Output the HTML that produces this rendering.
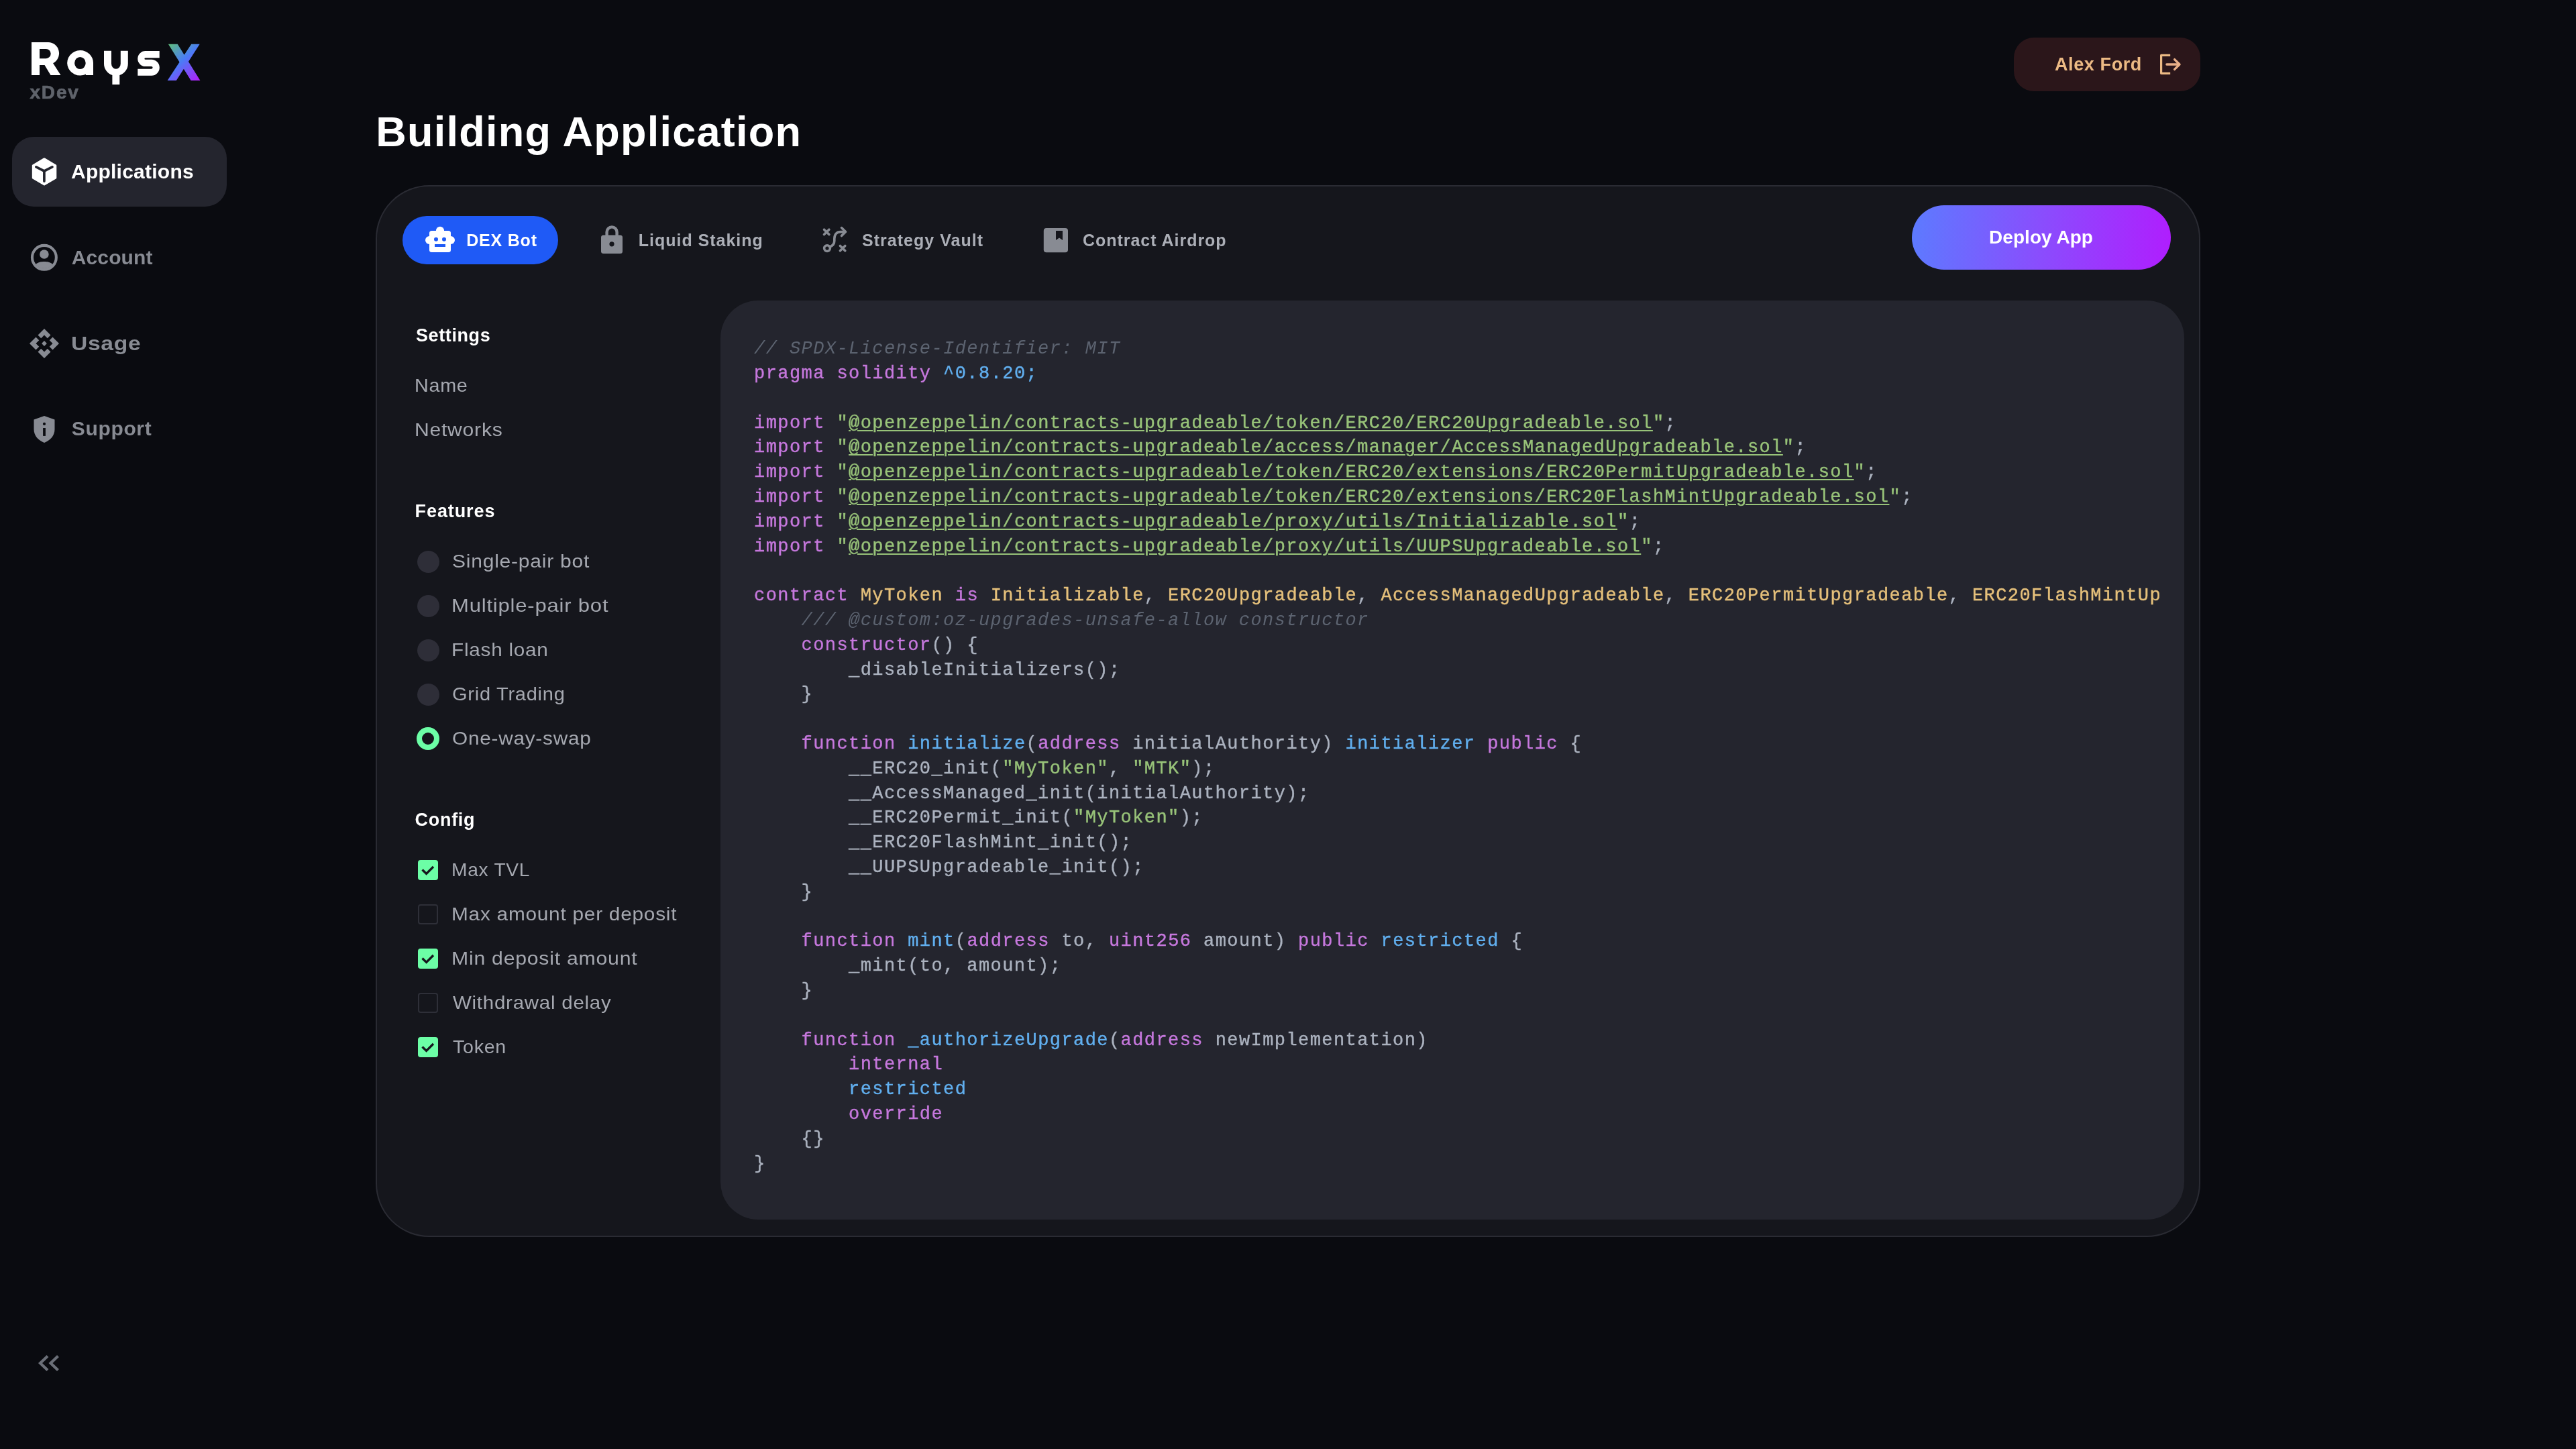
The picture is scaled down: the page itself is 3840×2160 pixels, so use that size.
<!DOCTYPE html>
<html><head><meta charset="utf-8"><title>RaysX xDev - Building Application</title>
<style>
html,body{margin:0;padding:0;background:#0a0b10;width:3840px;height:2160px;overflow:hidden}
.abs{position:absolute}
.t{position:absolute;white-space:nowrap;font-family:"Liberation Sans", sans-serif}
pre.code{margin:0;-webkit-text-stroke:0.4px currentColor;font-family:"Liberation Mono", monospace;font-size:27px;letter-spacing:1.427px;line-height:36.8px;color:#abb2bf;white-space:pre}
.c{color:#5c6370;font-style:italic;-webkit-text-stroke:0} .k{color:#c678dd} .b{color:#61afef} .s{color:#98c379} .y{color:#e5c07b} .d{color:#abb2bf}
.u{text-decoration:underline;text-decoration-thickness:2px;text-underline-offset:3px}
svg text{font-family:"Liberation Sans", sans-serif}
@media (max-width:2000px){html{zoom:0.5}}
</style></head>
<body>
<div id="root" style="position:absolute;left:0;top:0;width:3840px;height:2160px;will-change:transform">
<svg class="abs" style="left:0;top:0" width="320" height="160" viewBox="0 0 320 160">
<defs>
<linearGradient id="xg" x1="250" y1="66" x2="298" y2="120" gradientUnits="userSpaceOnUse">
<stop offset="0" stop-color="#5fbf7a"/><stop offset="0.45" stop-color="#4a7cf6"/><stop offset="1" stop-color="#b51cfb"/>
</linearGradient>
</defs>
<g fill="#ffffff">
<!-- R -->
<path d="M47 63 H72 A16 16.5 0 0 1 79.1 94.3 L90.5 112 H75.5 L66.5 97 H59 V112 H47 Z M59 73 V87.2 H68.7 A7 7.1 0 0 0 68.7 73 Z" fill-rule="evenodd"/>
<!-- a -->
<path d="M119.5 75 A19.5 18.8 0 1 0 128 110.8 V112 H139 V93.8 A19.5 18.8 0 0 0 119.5 75 Z M119.4 84.9 A8.3 9.1 0 1 0 119.4 103.1 A8.3 9.1 0 1 0 119.4 84.9 Z" fill-rule="evenodd"/>
<!-- y -->
<path d="M155 75.7 H166 V95 A6.9 7.8 0 0 0 179.8 95 V75.7 H190.8 V95 A17.9 17.9 0 0 1 178.3 112 V126 H167.4 V112 A17.9 17.9 0 0 1 155 95 Z"/>
</g>
<!-- s -->
<path d="M237.7 81.15 H216.7 A6.375 6.375 0 0 0 216.7 93.9 H225.8 A6.925 6.925 0 0 1 225.8 107.75 H205.3" fill="none" stroke="#fff" stroke-width="10.2"/>
<!-- X -->
<path d="M250.9 65.8 H264.7 L298.4 120 H284.6 Z M285.2 65.8 H297.7 L262.8 120 H249.6 Z" fill="url(#xg)"/>
</svg>
<div class="t" style="left:44.5px;top:123.79px;font-size:28px;line-height:28px;color:#5f636b;font-weight:700;letter-spacing:1.8px;-webkit-text-stroke:0.7px #5f636b;">xDev</div>
<div class="abs" style="left:18px;top:204px;width:320px;height:104px;border-radius:32px;background:#24252e"></div>
<svg class="abs" style="left:44px;top:232px" width="44" height="48" viewBox="0 0 44 48">
<path d="M22 5 L38.7 14.8 V33.2 L22 42.8 L5.4 33.2 V14.8 Z" fill="#fff" stroke="#fff" stroke-width="3.2" stroke-linejoin="round"/>
<path d="M9.9 16.9 L21.9 23 L33.9 16.9 M21.9 23 V38.1" fill="none" stroke="#24252e" stroke-width="3.7" stroke-linecap="round" stroke-linejoin="round"/>
</svg>
<div class="t" style="left:106px;top:240.80px;font-size:30px;line-height:30px;color:#ffffff;font-weight:700;letter-spacing:0.24px;">Applications</div>
<svg class="abs" style="left:45px;top:363px" width="42" height="42" viewBox="0 0 42 42">
<circle cx="20.9" cy="20.8" r="17.95" fill="none" stroke="#888b93" stroke-width="4.1"/>
<circle cx="20.9" cy="16" r="6.8" fill="#888b93"/>
<path d="M8.3 30.9 C12 27.5 16.5 26.9 20.9 26.9 C25.3 26.9 29.8 27.5 33.6 30.9 A16 16 0 0 1 8.3 30.9 Z" fill="#888b93"/>
</svg>
<div class="t" style="left:106.8px;top:369.00px;font-size:30px;line-height:30px;color:#888b93;font-weight:700;letter-spacing:0.1px;">Account</div>
<svg class="abs" style="left:44px;top:490px" width="44" height="44" viewBox="0 0 44 44">
<g fill="#888b93">
<path d="M22 0 L31.5 9.5 L26.75 14.25 L22 9.5 L17.25 14.25 L12.5 9.5 Z"/>
<path d="M22 44 L31.5 34.5 L26.75 29.75 L22 34.5 L17.25 29.75 L12.5 34.5 Z"/>
<path d="M0 22 L9.5 12.5 L14.25 17.25 L9.5 22 L14.25 26.75 L9.5 31.5 Z"/>
<path d="M44 22 L34.5 12.5 L29.75 17.25 L34.5 22 L29.75 26.75 L34.5 31.5 Z"/>
<path d="M22 18.1 L25.9 22 L22 25.9 L18.1 22 Z"/>
</g></svg>
<div class="t" style="left:106.3px;top:496.60px;font-size:30px;line-height:30px;color:#888b93;font-weight:700;letter-spacing:0.6px;transform:scaleX(1.122);transform-origin:0 0;">Usage</div>
<svg class="abs" style="left:49px;top:619px" width="34" height="42" viewBox="0 0 34 42">
<path d="M17 1 L32.5 6.5 V21 C32.5 31 25.5 37.5 17 41 C8.5 37.5 1.5 31 1.5 21 V6.5 Z" fill="#888b93"/>
<circle cx="17" cy="12.9" r="2.1" fill="#0a0b10"/>
<rect x="15.1" y="19" width="3.8" height="11.9" fill="#0a0b10"/>
</svg>
<div class="t" style="left:106.8px;top:624.40px;font-size:30px;line-height:30px;color:#888b93;font-weight:700;letter-spacing:0.65px;">Support</div>
<svg class="abs" style="left:50px;top:2012px" width="46" height="40" viewBox="0 0 46 40">
<path d="M21 9.5 L10 20 L21 30.5 M36.5 9.5 L25.5 20 L36.5 30.5" fill="none" stroke="#6b6f78" stroke-width="4.2"/>
</svg>
<div class="t" style="left:560.2px;top:165.36px;font-size:63px;line-height:63px;color:#ffffff;font-weight:700;letter-spacing:1.25px;">Building Application</div>
<div class="abs" style="left:3002px;top:56px;width:278px;height:80px;border-radius:30px;background:#2b161a"></div>
<div class="t" style="left:3063px;top:83.14px;font-size:27px;line-height:27px;color:#ecba84;font-weight:700;letter-spacing:0.6px;">Alex Ford</div>
<svg class="abs" style="left:3216px;top:78px" width="40" height="36" viewBox="0 0 40 36">
<path d="M19.2 4.4 H5.6 V31.3 H19.2" fill="none" stroke="#ecba84" stroke-width="3.2" stroke-linejoin="round"/>
<path d="M13.9 18 H32.5 M25.6 10.6 L33 18 L25.6 25.4" fill="none" stroke="#e9b088" stroke-width="3.4" stroke-linecap="round" stroke-linejoin="round"/>
</svg>
<div class="abs" style="left:560px;top:276px;width:2716px;height:1564px;border:2px solid #2a2b33;border-radius:80px;background:#15161c"></div>
<div class="abs" style="left:600px;top:322px;width:232px;height:72px;border-radius:36px;background:#1f5af6"></div>
<svg class="abs" style="left:633px;top:336px" width="46" height="42" viewBox="0 0 46 42">
<g fill="#fff">
<circle cx="23" cy="7.9" r="6.1"/>
<rect x="7" y="8" width="32" height="32" rx="3.5"/>
<circle cx="7.1" cy="22" r="6.1"/><circle cx="38.9" cy="22" r="6.1"/>
</g>
<circle cx="17" cy="20.8" r="3" fill="#1f5af6"/><circle cx="29" cy="20.8" r="3" fill="#1f5af6"/>
<rect x="15" y="28" width="16" height="4" fill="#1f5af6"/>
</svg>
<div class="t" style="left:695.2px;top:345.93px;font-size:25px;line-height:25px;color:#ffffff;font-weight:700;letter-spacing:0.8px;">DEX Bot</div>
<svg class="abs" style="left:895px;top:335px" width="34" height="44" viewBox="0 0 34 44">
<path d="M9.6 18 V10.9 A7.5 7.5 0 0 1 24.6 10.9 V18" fill="none" stroke="#888b93" stroke-width="4.4"/>
<rect x="1" y="15.4" width="32" height="27.6" rx="3.5" fill="#888b93"/>
<circle cx="17" cy="28.8" r="3.6" fill="#15161c"/>
</svg>
<div class="t" style="left:951.8px;top:345.93px;font-size:25px;line-height:25px;color:#abaeb6;font-weight:700;letter-spacing:0.98px;">Liquid Staking</div>
<svg class="abs" style="left:1224px;top:337px" width="40" height="40" viewBox="0 0 40 40">
<g stroke="#888b93" stroke-width="3.6" fill="none" stroke-linecap="round" stroke-linejoin="round">
<path d="M4.5 5.2 L11.9 12.6 M11.9 5.2 L4.5 12.6"/>
<path d="M28.4 29.4 L35.8 36.8 M35.8 29.4 L28.4 36.8"/>
<path d="M13 31 C17 29.5 19.8 27 19.8 22 V19 C19.8 12.5 23 8.6 29 8.6 H36"/>
<path d="M30.5 2.6 L36.5 8.6 L30.5 14.6"/>
<circle cx="9" cy="33.1" r="4.4"/>
</g></svg>
<div class="t" style="left:1285px;top:345.93px;font-size:25px;line-height:25px;color:#abaeb6;font-weight:700;letter-spacing:1.02px;">Strategy Vault</div>
<svg class="abs" style="left:1555px;top:339px" width="38" height="38" viewBox="0 0 38 38">
<rect x="0.8" y="1" width="36.2" height="36.2" rx="4" fill="#888b93"/>
<path d="M19 5 H29 V19 L24 15.5 L19 19 Z" fill="#15161c"/>
</svg>
<div class="t" style="left:1614px;top:345.93px;font-size:25px;line-height:25px;color:#abaeb6;font-weight:700;letter-spacing:0.97px;">Contract Airdrop</div>
<div class="abs" style="left:2850px;top:306px;width:386px;height:96px;border-radius:48px;background:linear-gradient(95deg,#5c7bff 0%,#8a4dfd 50%,#b01dfe 100%)"></div>
<div class="t" style="left:2965px;top:340.29px;font-size:28px;line-height:28px;color:#ffffff;font-weight:700;letter-spacing:0.05px;">Deploy App</div>
<div class="t" style="left:620px;top:487.14px;font-size:27px;line-height:27px;color:#ffffff;font-weight:700;letter-spacing:0.6px;">Settings</div>
<div class="t" style="left:618px;top:560.52px;font-size:27.5px;line-height:27.5px;color:#a5a8b0;font-weight:400;letter-spacing:0.7px;transform:scaleX(1.0450);transform-origin:0 0;">Name</div>
<div class="t" style="left:618px;top:626.72px;font-size:27.5px;line-height:27.5px;color:#a5a8b0;font-weight:400;letter-spacing:0.7px;transform:scaleX(1.0940);transform-origin:0 0;">Networks</div>
<div class="t" style="left:618.6px;top:749.14px;font-size:27px;line-height:27px;color:#ffffff;font-weight:700;letter-spacing:0.9px;">Features</div>
<div class="abs" style="left:621.5px;top:820.6px;width:33px;height:33px;border-radius:50%;background:#2e2e38"></div>
<div class="t" style="left:674.1px;top:822.72px;font-size:27.5px;line-height:27.5px;color:#a5a8b0;font-weight:400;letter-spacing:0.7px;transform:scaleX(1.0920);transform-origin:0 0;">Single-pair bot</div>
<div class="abs" style="left:621.5px;top:886.6px;width:33px;height:33px;border-radius:50%;background:#2e2e38"></div>
<div class="t" style="left:673px;top:888.72px;font-size:27.5px;line-height:27.5px;color:#a5a8b0;font-weight:400;letter-spacing:0.7px;transform:scaleX(1.1290);transform-origin:0 0;">Multiple-pair bot</div>
<div class="abs" style="left:621.5px;top:952.6px;width:33px;height:33px;border-radius:50%;background:#2e2e38"></div>
<div class="t" style="left:673px;top:954.72px;font-size:27.5px;line-height:27.5px;color:#a5a8b0;font-weight:400;letter-spacing:0.7px;transform:scaleX(1.0800);transform-origin:0 0;">Flash loan</div>
<div class="abs" style="left:621.5px;top:1018.6px;width:33px;height:33px;border-radius:50%;background:#2e2e38"></div>
<div class="t" style="left:674px;top:1020.72px;font-size:27.5px;line-height:27.5px;color:#a5a8b0;font-weight:400;letter-spacing:0.7px;transform:scaleX(1.0550);transform-origin:0 0;">Grid Trading</div>
<div class="abs" style="left:621px;top:1084.2px;width:34px;height:34px;border-radius:50%;box-sizing:border-box;border:8.7px solid #6cfea6"></div>
<div class="t" style="left:674px;top:1086.72px;font-size:27.5px;line-height:27.5px;color:#a5a8b0;font-weight:400;letter-spacing:0.7px;transform:scaleX(1.0820);transform-origin:0 0;">One-way-swap</div>
<div class="t" style="left:618.6px;top:1209.14px;font-size:27px;line-height:27px;color:#ffffff;font-weight:700;letter-spacing:0.7px;">Config</div>
<div class="abs" style="left:623px;top:1282.0px;width:30px;height:30px;border-radius:4px;background:#6cfea6"></div>
<svg class="abs" style="left:623px;top:1282.0px" width="30" height="30" viewBox="0 0 30 30"><path d="M6.5 14.5 L12.6 20.5 L23 10" fill="none" stroke="#15161c" stroke-width="3.3"/></svg>
<div class="t" style="left:673px;top:1282.72px;font-size:27.5px;line-height:27.5px;color:#a5a8b0;font-weight:400;letter-spacing:0.7px;transform:scaleX(1.0240);transform-origin:0 0;">Max TVL</div>
<div class="abs" style="left:623px;top:1348.0px;width:30px;height:30px;border-radius:4px;box-sizing:border-box;border:2.5px solid #2e2f38"></div>
<div class="t" style="left:673px;top:1348.72px;font-size:27.5px;line-height:27.5px;color:#a5a8b0;font-weight:400;letter-spacing:0.7px;transform:scaleX(1.0830);transform-origin:0 0;">Max amount per deposit</div>
<div class="abs" style="left:623px;top:1414.1px;width:30px;height:30px;border-radius:4px;background:#6cfea6"></div>
<svg class="abs" style="left:623px;top:1414.1px" width="30" height="30" viewBox="0 0 30 30"><path d="M6.5 14.5 L12.6 20.5 L23 10" fill="none" stroke="#15161c" stroke-width="3.3"/></svg>
<div class="t" style="left:673px;top:1414.72px;font-size:27.5px;line-height:27.5px;color:#a5a8b0;font-weight:400;letter-spacing:0.7px;transform:scaleX(1.0980);transform-origin:0 0;">Min deposit amount</div>
<div class="abs" style="left:623px;top:1480.2px;width:30px;height:30px;border-radius:4px;box-sizing:border-box;border:2.5px solid #2e2f38"></div>
<div class="t" style="left:675px;top:1480.72px;font-size:27.5px;line-height:27.5px;color:#a5a8b0;font-weight:400;letter-spacing:0.7px;transform:scaleX(1.0720);transform-origin:0 0;">Withdrawal delay</div>
<div class="abs" style="left:623px;top:1546.2px;width:30px;height:30px;border-radius:4px;background:#6cfea6"></div>
<svg class="abs" style="left:623px;top:1546.2px" width="30" height="30" viewBox="0 0 30 30"><path d="M6.5 14.5 L12.6 20.5 L23 10" fill="none" stroke="#15161c" stroke-width="3.3"/></svg>
<div class="t" style="left:675px;top:1546.72px;font-size:27.5px;line-height:27.5px;color:#a5a8b0;font-weight:400;letter-spacing:0.7px;transform:scaleX(1.0400);transform-origin:0 0;">Token</div>
<div class="abs" style="left:1074px;top:448px;width:2182px;height:1370px;border-radius:56px;background:#24252e"></div>
<div class="abs" style="left:1124px;top:502.22px;width:2095px;height:1330px;overflow:hidden"><pre class="code"><span class="c">// SPDX-License-Identifier: MIT</span>
<span class="k">pragma</span> <span class="k">solidity</span> <span class="b">^0.8.20;</span>

<span class="k">import</span> <span class="s">&quot;</span><span class="s u">@openzeppelin/contracts-upgradeable/token/ERC20/ERC20Upgradeable.sol</span><span class="s">&quot;</span><span class="d">;</span>
<span class="k">import</span> <span class="s">&quot;</span><span class="s u">@openzeppelin/contracts-upgradeable/access/manager/AccessManagedUpgradeable.sol</span><span class="s">&quot;</span><span class="d">;</span>
<span class="k">import</span> <span class="s">&quot;</span><span class="s u">@openzeppelin/contracts-upgradeable/token/ERC20/extensions/ERC20PermitUpgradeable.sol</span><span class="s">&quot;</span><span class="d">;</span>
<span class="k">import</span> <span class="s">&quot;</span><span class="s u">@openzeppelin/contracts-upgradeable/token/ERC20/extensions/ERC20FlashMintUpgradeable.sol</span><span class="s">&quot;</span><span class="d">;</span>
<span class="k">import</span> <span class="s">&quot;</span><span class="s u">@openzeppelin/contracts-upgradeable/proxy/utils/Initializable.sol</span><span class="s">&quot;</span><span class="d">;</span>
<span class="k">import</span> <span class="s">&quot;</span><span class="s u">@openzeppelin/contracts-upgradeable/proxy/utils/UUPSUpgradeable.sol</span><span class="s">&quot;</span><span class="d">;</span>

<span class="k">contract</span> <span class="y">MyToken</span> <span class="k">is</span> <span class="y">Initializable</span><span class="d">, </span><span class="y">ERC20Upgradeable</span><span class="d">, </span><span class="y">AccessManagedUpgradeable</span><span class="d">, </span><span class="y">ERC20PermitUpgradeable</span><span class="d">, </span><span class="y">ERC20FlashMintUpgradeable</span><span class="d">, </span><span class="y">UUPSUpgradeable</span> <span class="d">{</span>
    <span class="c">/// @custom:oz-upgrades-unsafe-allow constructor</span>
    <span class="k">constructor</span><span class="d">() {</span>
        <span class="d">_disableInitializers();</span>
    <span class="d">}</span>

    <span class="k">function</span> <span class="b">initialize</span><span class="d">(</span><span class="k">address</span> <span class="d">initialAuthority)</span> <span class="b">initializer</span> <span class="k">public</span> <span class="d">{</span>
        <span class="d">__ERC20_init(</span><span class="s">&quot;MyToken&quot;</span><span class="d">, </span><span class="s">&quot;MTK&quot;</span><span class="d">);</span>
        <span class="d">__AccessManaged_init(initialAuthority);</span>
        <span class="d">__ERC20Permit_init(</span><span class="s">&quot;MyToken&quot;</span><span class="d">);</span>
        <span class="d">__ERC20FlashMint_init();</span>
        <span class="d">__UUPSUpgradeable_init();</span>
    <span class="d">}</span>

    <span class="k">function</span> <span class="b">mint</span><span class="d">(</span><span class="k">address</span> <span class="d">to, </span><span class="k">uint256</span> <span class="d">amount)</span> <span class="k">public</span> <span class="b">restricted</span> <span class="d">{</span>
        <span class="d">_mint(to, amount);</span>
    <span class="d">}</span>

    <span class="k">function</span> <span class="b">_authorizeUpgrade</span><span class="d">(</span><span class="k">address</span> <span class="d">newImplementation)</span>
        <span class="k">internal</span>
        <span class="b">restricted</span>
        <span class="k">override</span>
    <span class="d">{}</span>
<span class="d">}</span></pre></div>
</div>
</body></html>
